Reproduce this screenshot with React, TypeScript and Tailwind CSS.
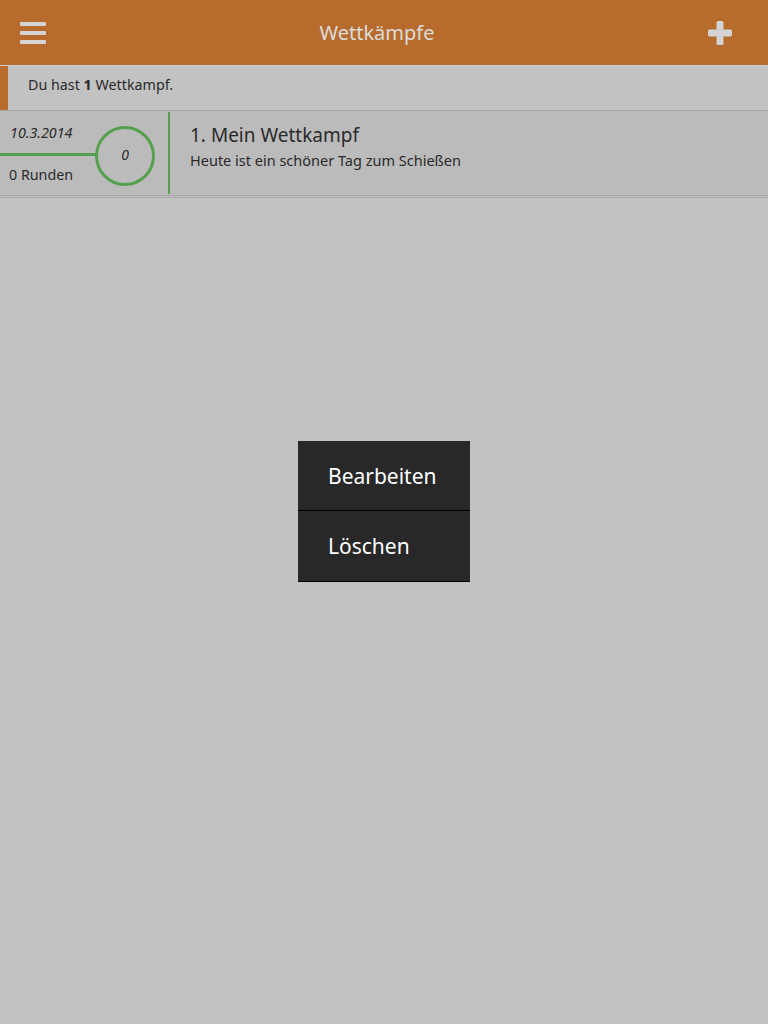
export default function App() {
  return (
    <div className="relative w-[768px] h-[1024px] bg-[#c2c2c2] font-['Noto_Sans',sans-serif] overflow-hidden">
      {/* Header */}
      <div className="h-[65px] bg-[#b76b2d] flex items-center justify-between px-5">
        <div className="flex flex-col gap-[5px] w-[26px]">
          <div className="h-[4px] bg-[#d4d4d4] rounded-[1px]" />
          <div className="h-[4px] bg-[#d4d4d4] rounded-[1px]" />
          <div className="h-[4px] bg-[#d4d4d4] rounded-[1px]" />
        </div>
        <div className="text-[20px] text-[#dcdcdc]">Wettkämpfe</div>
        <svg width="24" height="24" viewBox="0 0 24 24" className="mr-[16px]">
          <rect x="8.5" y="0" width="7" height="24" rx="1.5" fill="#d4d4d4" />
          <rect x="0" y="8.5" width="24" height="7" rx="1.5" fill="#d4d4d4" />
        </svg>
      </div>

      {/* Info bar */}
      <div className="h-[46px] flex border-t border-[#d0d0d0] border-b border-b-[#a8a8a8]">
        <div className="w-[8px] bg-[#b76b2d]" />
        <div className="flex items-center pl-[20px] pb-[6px] text-[14.3px] text-[#2a2a2a]">
          Du hast&nbsp;<span className="font-bold">1</span>&nbsp;Wettkampf.
        </div>
      </div>

      {/* Competition row */}
      <div className="h-[85px] flex bg-[#bbbbbb] border-b border-[#a8a8a8]">
        <div className="relative w-[168px] h-full">
          <div className="absolute left-[10px] top-[11px] text-[14.3px] italic text-[#2a2a2a]">10.3.2014</div>
          <div className="absolute left-0 top-[42px] w-[96px] h-[3px] bg-[#55a04f]" />
          <div className="absolute left-[95px] top-[15px] w-[60px] h-[60px] rounded-full border-[3px] border-[#55a04f] flex items-center justify-center text-[14px] italic text-[#2a2a2a] pb-[4px]">
            0
          </div>
          <div className="absolute left-[9px] top-[53px] text-[14.3px] text-[#2a2a2a]">0 Runden</div>
        </div>
        <div className="w-[2px] my-[1px] bg-[#55a04f]" />
        <div className="flex flex-col pl-[20px] pt-[11px]">
          <div className="text-[19px] text-[#2a2a2a] leading-[27px]">1. Mein Wettkampf</div>
          <div className="text-[14.5px] text-[#2a2a2a] leading-[22px]">Heute ist ein schöner Tag zum Schießen</div>
        </div>
      </div>
      <div className="h-[2px] border-b border-[#a8a8a8]" />

      {/* Context menu */}
      <div className="absolute left-[298px] top-[441px] w-[172px] bg-[#282828] border-b border-black">
        <div className="h-[70px] flex items-center pl-[30px] pt-[2px] text-[21px] text-white border-b border-black">Bearbeiten</div>
        <div className="h-[70px] flex items-center pl-[30px] pt-[2px] text-[21px] text-white">Löschen</div>
      </div>
    </div>
  );
}
